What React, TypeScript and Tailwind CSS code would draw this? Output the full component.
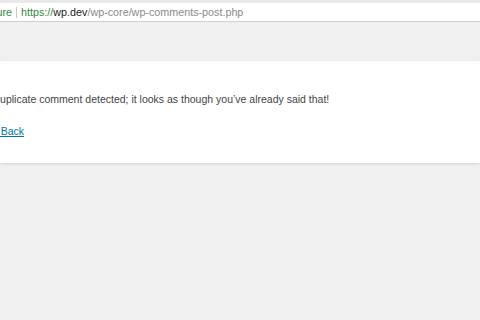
import React from "react";

export default function App() {
  return (
    <div
      className="w-[480px] h-[320px] overflow-hidden bg-[#f1f1f1] flex flex-col"
      style={{ fontFamily: '"Liberation Sans", Arial, sans-serif' }}
    >
      <div className="h-[3px] bg-[#e9e9e9] shrink-0" />
      <div className="h-[19px] bg-white border-b border-[#cfcfcf] flex items-center shrink-0 text-[10.75px] leading-none whitespace-nowrap">
        <div className="flex items-center ml-[-22px] mt-[1px]">
          <span className="text-[#2f8a3e]">Secure</span>
          <span className="mx-[4px] w-px h-[11px] bg-[#c8c8c8]" />
          <span className="text-[#2f8a3e]">https://</span>
          <span className="text-[#222]">wp.dev</span>
          <span className="text-[#8a8a8a]">/wp-core/wp-comments-post.php</span>
        </div>
      </div>
      <div className="h-[39px] shrink-0" />
      <div className="bg-white h-[102px] shrink-0 shadow-[0_1px_3px_rgba(0,0,0,0.13)] flex flex-col text-[10.5px] text-[#444] whitespace-nowrap">
        <div className="ml-[-7.5px] mt-[30px] leading-[16px]">
          Duplicate comment detected; it looks as though you’ve already said that!
        </div>
        <div className="ml-[-8px] mt-[16px] leading-[16px]">
          <a href="#" className="text-[#0073aa] underline">
            « Back
          </a>
        </div>
      </div>
    </div>
  );
}
